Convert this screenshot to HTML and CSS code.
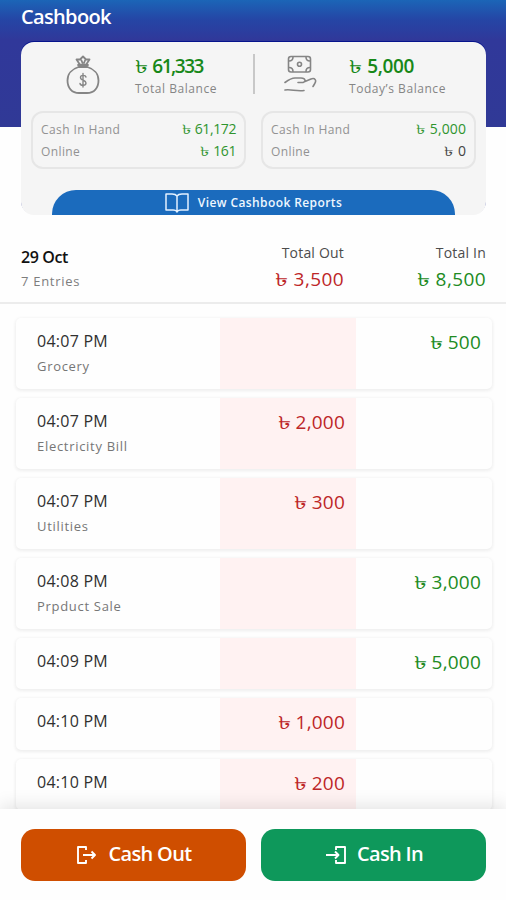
FILE: index.html
```html
<!DOCTYPE html>
<html lang="en">
<head>
<meta charset="utf-8">
<title>Cashbook</title>
<link rel="stylesheet" href="styles.css">
</head>
<body>
<div class="screen">
  <header class="hero">
    <h1 class="title">Cashbook</h1>
    <section class="card">
      <div class="balances">
        <div class="balance total">
          <svg class="bag" viewBox="0 0 34 40" fill="none" stroke="#858585" stroke-width="1.800" stroke-linecap="round" stroke-linejoin="round"><path d="M12.500 12C6 14 1.500 19 1.500 25.500C1.500 33 6 38 13 38H21C28 38 32.500 33 32.500 25.500C32.500 19 28 14 21.500 12Z"/><path d="M12.500 10H21.500" stroke-width="2.600"/><path d="M13.500 9L10.500 4.500L14 4.500L17 1.500L20 4.500L23.500 4.500L20.500 9M15.500 5.500L16.500 8M19 5.500L18 8"/><path d="M20 22C19.500 20 14.500 19.500 14.500 22.500C14.500 26 20 24.500 20 28C20 31 14.500 31 14 28.500M17 18.500V32" stroke-width="1.400"/></svg>
          <div><p class="amount"><span class="tk">৳</span> 61,333</p><p class="caption">Total Balance</p></div>
        </div>
        <div class="divider"></div>
        <div class="balance today">
          <svg class="hand" viewBox="0 0 34 38" fill="none" stroke="#858585" stroke-width="1.600" stroke-linecap="round" stroke-linejoin="round"><rect x="5.500" y="1.500" width="22" height="15.500" rx="2.500"/><path d="M10 2C10 5 8.500 6 6 6M23 2C23 5 24.500 6 27 6M10 16.500C10 14 8.500 12.500 6 12.500M23 16.500C23 14 24.500 12.500 27 12.500"/><circle cx="16.500" cy="9.200" r="2"/><path d="M2 27.500C6 24.500 8 23 12 23H18C23 23 23.500 27.500 18.500 27.500H15M22 26.500L28 24C32 22.500 34 25.500 31.500 29L30 31.500M2 35C8 34 13 36.500 21 35.500"/></svg>
          <div><p class="amount"><span class="tk">৳</span> 5,000</p><p class="caption">Today’s Balance</p></div>
        </div>
      </div>
      <div class="splits">
        <dl class="split"><div><dt>Cash In Hand</dt><dd><span class="tk">৳</span> 61,172</dd></div><div><dt>Online</dt><dd><span class="tk">৳</span> 161</dd></div></dl>
        <dl class="split"><div><dt>Cash In Hand</dt><dd><span class="tk">৳</span> 5,000</dd></div><div><dt>Online</dt><dd class="zero"><span class="tk">৳</span> 0</dd></div></dl>
      </div>
      <a class="reports"><svg viewBox="0 0 24 20" fill="none" stroke="#e4f1ff" stroke-width="1.500" stroke-linejoin="round"><path d="M12 3C11 1.500 9 1 7 1H1V17H8C10 17 11.500 17.500 12 19C12.500 17.500 14 17 16 17H23V1H17C15 1 13 1.500 12 3ZM12 3V19"/></svg><span>View Cashbook Reports</span></a>
    </section>
  </header>
  <section class="summary">
    <div class="day"><h2>29 Oct</h2><p>7 Entries</p></div>
    <div class="sum out"><h3>Total Out</h3><p><span class="tk">৳</span> 3,500</p></div>
    <div class="sum in"><h3>Total In</h3><p><span class="tk">৳</span> 8,500</p></div>
  </section>
  <main class="entries">
    <article class="entry"><div class="info"><h4>04:07 PM</h4><p>Grocery</p></div><div class="out"></div><div class="in"><span class="tk">৳</span> 500</div></article>
    <article class="entry"><div class="info"><h4>04:07 PM</h4><p>Electricity Bill</p></div><div class="out"><span class="tk">৳</span> 2,000</div><div class="in"></div></article>
    <article class="entry"><div class="info"><h4>04:07 PM</h4><p>Utilities</p></div><div class="out"><span class="tk">৳</span> 300</div><div class="in"></div></article>
    <article class="entry"><div class="info"><h4>04:08 PM</h4><p>Prpduct Sale</p></div><div class="out"></div><div class="in"><span class="tk">৳</span> 3,000</div></article>
    <article class="entry short"><div class="info"><h4>04:09 PM</h4></div><div class="out"></div><div class="in"><span class="tk">৳</span> 5,000</div></article>
    <article class="entry short"><div class="info"><h4>04:10 PM</h4></div><div class="out"><span class="tk">৳</span> 1,000</div><div class="in"></div></article>
    <article class="entry short"><div class="info"><h4>04:10 PM</h4></div><div class="out"><span class="tk">৳</span> 200</div><div class="in"></div></article>
  </main>
  <footer class="actions">
    <button class="btn cash-out"><svg viewBox="0 0 22 20" fill="none" stroke="#fff" stroke-width="1.900" stroke-linejoin="round"><path d="M11 5V2H3V18H11V15M8 10H20M16.500 6.500L20 10L16.500 13.500"/></svg><span>Cash Out</span></button>
    <button class="btn cash-in"><svg viewBox="0 0 22 20" fill="none" stroke="#fff" stroke-width="1.900" stroke-linejoin="round"><path d="M12 5V2H21V18H12V15M2 10H14.500M11 6.500L14.500 10L11 13.500"/></svg><span>Cash In</span></button>
  </footer>
</div>
</body>
</html>
```
FILE: styles.css
```css
* { box-sizing: border-box; margin: 0; padding: 0; }
body { background: #fefefe; font-family: "Open Sans", "Noto Sans", sans-serif; color: #222; }
h1, h2, h3, h4 { font-weight: 500; }
p, h1, h2, h3, h4, dt, dd, span { white-space: nowrap; }
.screen { width: 506px; height: 900px; display: flex; flex-direction: column; overflow: hidden; }
.hero { height: 215px; flex: none; padding: 0 20px 0 21px; background: linear-gradient(#1b65b7 0, #2545a5 20px, #30389a 40px, #303996 127px, #fefefe 127px); }
.title { height: 42px; line-height: 33px; color: #fff; font-size: 20px; font-weight: 600; letter-spacing: -.65px; }
.card { height: 173px; border-radius: 13px; background: #f5f5f5; box-shadow: 0 -1px 0 #06138c; display: flex; flex-direction: column; }
.balances { height: 69px; display: flex; padding-top: 10px; }
.balance { display: flex; }
.total { width: 232px; padding-left: 45px; gap: 35px; }
.today { padding-left: 28px; gap: 32px; }
.bag { width: 34px; height: 40px; margin-top: 3px; }
.hand { width: 34px; height: 38px; margin-top: 3px; }
.divider { width: 2px; height: 40px; margin-top: 2px; background: #c8c8c8; }
.tk { display: inline-block; transform: scale(1.4, .95); transform-origin: left center; margin-right: .2em; letter-spacing: 0; }
.amount { color: #178818; font-size: 19px; font-weight: 600; line-height: 28px; letter-spacing: -1.1px; }
.amount .tk { font-weight: 500; margin-right: .25em; }
.total .amount { letter-spacing: -1.45px; }
.today .amount { letter-spacing: -.4px; }
.caption { color: #858585; font-size: 12px; line-height: 18px; letter-spacing: .55px; }
.splits { display: flex; gap: 15px; padding: 0 10px; }
.split { width: 215px; height: 58px; border: 2px solid #e6e6e6; border-radius: 12px; padding: 5px 8px; }
.split div { display: flex; justify-content: space-between; height: 22px; line-height: 23px; }
dt { color: #929292; font-size: 12px; letter-spacing: .4px; }
dd { color: #2f942e; font-size: 14px; line-height: 22px; letter-spacing: -.4px; }
.split + .split dd { letter-spacing: .1px; }
.zero { color: #444; }
.reports { margin: 21px 31px 0; height: 25px; border-radius: 24px 24px 0 0; background: #1b6bbd; color: #eef7ff; display: flex; justify-content: center; align-items: center; gap: 9px; font-size: 12px; font-weight: 600; letter-spacing: .4px; }
.reports svg { width: 24px; height: 20px; }
.summary { height: 89px; flex: none; border-bottom: 2px solid #ececec; padding: 28px 20px 0 21px; display: flex; }
.day { width: 188px; }
.day h2 { color: #111; font-size: 16px; font-weight: 600; line-height: 28px; letter-spacing: -.4px; }
.day p { color: #7d7d7d; font-size: 13px; line-height: 20px; letter-spacing: .7px; }
.sum { width: 135px; text-align: right; }
.sum.in { width: 142px; }
.sum h3 { color: #4c4c4c; font-size: 14px; line-height: 20px; letter-spacing: .2px; }
.sum p { font-size: 19px; line-height: 32px; letter-spacing: .4px; }
.out { color: #bd2628; }
.in { color: #218b23; }
.entries { flex: 1; min-height: 0; overflow: hidden; padding: 14px 14px 0 16px; display: flex; flex-direction: column; gap: 9px; }
.entry { height: 71px; flex: none; display: grid; grid-template-columns: 204px 136px 1fr; border-radius: 5px; box-shadow: 0 1px 3px 1px #efefef; background: #fefefe; }
.entry.short { height: 51.3px; }
.entry > .out, .entry > .in { text-align: right; font-size: 19px; line-height: 26px; padding: 11px 11px 0 0; letter-spacing: .2px; }
.entry > .out { background: #fff2f2; }
.info { padding: 10px 0 0 21px; }
.info h4 { color: #303030; font-size: 16px; line-height: 27px; letter-spacing: .25px; }
.info p { color: #767676; font-size: 13px; line-height: 23px; letter-spacing: .7px; }
.actions { height: 91px; flex: none; padding: 20px 20px 0 21px; display: flex; gap: 15px; background: #fefefe; box-shadow: 0 -4px 16px rgba(0,0,0,.1); position: relative; }
.btn { width: 225px; height: 52px; border: 0; border-radius: 14px; color: #fff; font: 600 20px "Open Sans", sans-serif; letter-spacing: -.65px; display: flex; align-items: center; justify-content: center; gap: 11px; padding: 0 0 3px; }
.btn svg { width: 22px; height: 20px; margin-top: 3px; }
.cash-out { background: #cf4e00; }
.cash-in { background: #0e985b; }
```
